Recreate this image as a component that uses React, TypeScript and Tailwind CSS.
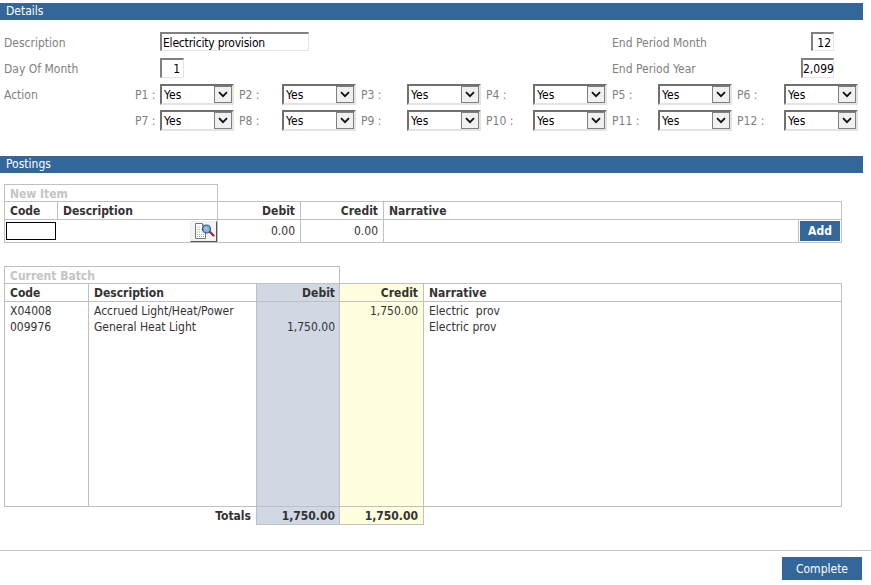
const periods = ['P1', 'P2', 'P3', 'P4', 'P5', 'P6', 'P7', 'P8', 'P9', 'P10', 'P11', 'P12']

function SectionBar({ title }: { title: string }) {
  return (
    <div className="h-[17px] w-[863px] bg-[#336699] pl-[6px] text-[12px] leading-[17px] text-white">{title}</div>
  )
}

function Field({ value, className }: { value: string; className: string }) {
  return (
    <div
      className={`h-full border-t-2 border-l-2 border-t-[#808080] border-l-[#808080] border-r border-b border-r-[#e4e4e4] border-b-[#e4e4e4] text-[12px] leading-[18px] text-black ${className}`}
    >
      {value}
    </div>
  )
}

function YesSelect() {
  return (
    <div className="flex h-[21px] w-[74px] items-center justify-between border-t-2 border-l-2 border-t-[#707070] border-l-[#707070] border-r-2 border-b-2 border-r-[#e4e4e4] border-b-[#e4e4e4] bg-white pl-[2px] text-[12px] text-black">
      <span className="pt-[1px]">Yes</span>
      <span className="flex h-[17px] w-[18px] items-center justify-center border border-[#808080] bg-[#f0f0f0]">
        <svg width="10" height="7" viewBox="0 0 10 7">
          <path d="M1 1.2 L5 5.2 L9 1.2" fill="none" stroke="#111" strokeWidth="1.8" />
        </svg>
      </span>
    </div>
  )
}

function LookupIcon() {
  return (
    <svg width="24" height="18" viewBox="0 0 24 18">
      <path d="M3.5 1.5h7l3 3v12h-10z" fill="#fff" stroke="#777" />
      <path d="M10.5 1.5v3h3" fill="#ddd" stroke="#777" />
      <path d="M5 5h4M5 7.5h5M5 10h5M5 12.5h7M5 14.5h7" stroke="#aaa" strokeDasharray="1 1" />
      <circle cx="14.5" cy="7" r="4" fill="#7fb2e0" stroke="#33597f" strokeWidth="1.2" />
      <path d="M13 5.5l2 2" stroke="#dff0ff" />
      <path d="M18 10l3.5 3.5" stroke="#9a3040" strokeWidth="2.4" strokeLinecap="round" />
    </svg>
  )
}

const cell = 'border border-[#c0c0c0] px-[5px] h-[18px] text-[12px] leading-[14px]'
const numCell = 'border border-[#c0c0c0] pl-[5px] pr-[4px] h-[18px] text-[12px] leading-[14px] text-right'

export default function App() {
  return (
    <div
      className="h-[585px] w-[871px] overflow-hidden bg-white pt-[3px] text-[12px] text-[#333] font-stretch-condensed"
      style={{ fontFamily: '"DejaVu Sans", sans-serif' }}
    >
      <SectionBar title="Details" />

      {/* Details form */}
      <div className="mt-[12px] flex h-[19px] items-center pl-[4px] text-[#808080]">
        <span className="w-[156px] pt-[2px]">Description</span>
        <Field value="Electricity provision" className="w-[149px] pl-[1px] tracking-[-0.2px]" />
        <span className="ml-[303px] w-[199px] pt-[2px]">End Period Month</span>
        <Field value="12" className="w-[23px] pr-[2px] text-right" />
      </div>
      <div className="mt-[7px] flex h-[20px] items-center pl-[4px] text-[#808080]">
        <span className="w-[156px] pt-[2px]">Day Of Month</span>
        <Field value="1" className="w-[24px] pr-[3px] text-right" />
        <span className="ml-[428px] w-[189px] pt-[2px]">End Period Year</span>
        <Field value="2,099" className="w-[33px] pr-[1px] text-right" />
      </div>
      <div className="mt-[6px] flex pl-[4px] text-[#808080]">
        <span className="w-[131px] leading-[23px]">Action</span>
        <div className="grid grid-cols-[25px_74px_48px_74px_51px_74px_52px_74px_51px_74px_52px_74px] gap-y-[5px]">
          {periods.map((p, i) => (
            <div key={p} className="contents">
              <span className={`h-[21px] leading-[23px] ${i % 6 === 0 ? '' : 'pl-[5px]'}`}>{p} :</span>
              <YesSelect />
            </div>
          ))}
        </div>
      </div>

      <div className="mt-[25px]">
        <SectionBar title="Postings" />
      </div>

      {/* New item */}
      <div className="ml-[4px] mt-[11px] h-[17px] w-[214px] border border-b-0 border-[#c0c0c0] pl-[5px] text-[12px] font-bold leading-[19px] text-[#c4c4c4]">
        New Item
      </div>
      <table className="ml-[4px] w-[837px] table-fixed border-collapse">
        <colgroup>
          <col className="w-[53px]" />
          <col className="w-[160px]" />
          <col className="w-[83px]" />
          <col className="w-[83px]" />
          <col className="w-[415px]" />
          <col className="w-[43px]" />
        </colgroup>
        <tbody>
          <tr className="font-bold">
            <td className={cell}>Code</td>
            <td className={cell}>Description</td>
            <td className={`${cell} text-right`}>Debit</td>
            <td className={`${cell} text-right`}>Credit</td>
            <td className={cell} colSpan={2}>
              Narrative
            </td>
          </tr>
          <tr>
            <td className="h-[23px] border border-[#c0c0c0] border-r-0 p-0 pl-[1px]">
              <div className="h-[18px] w-[50px] border border-black bg-white" />
            </td>
            <td className="border border-[#c0c0c0] border-l-0 p-0">
              <div className="ml-auto flex h-[21px] w-[27px] items-center justify-center border border-t-[#eee] border-l-[#eee] border-r-[#555] border-b-[#555] bg-[#f4f4f4]">
                <LookupIcon />
              </div>
            </td>
            <td className={`${cell} text-right`}>0.00</td>
            <td className={`${cell} text-right`}>0.00</td>
            <td className={cell}></td>
            <td className="border border-[#c0c0c0] p-0 text-center">
              <button className="mx-auto block h-[20px] w-[40px] bg-[#336699] text-[12px] font-bold leading-[20px] text-white">
                Add
              </button>
            </td>
          </tr>
        </tbody>
      </table>

      {/* Current batch */}
      <div className="ml-[4px] mt-[23px] h-[17px] w-[336px] border border-b-0 border-[#c0c0c0] pl-[5px] text-[12px] font-bold leading-[19px] text-[#c4c4c4]">
        Current Batch
      </div>
      <table className="ml-[4px] w-[837px] table-fixed border-collapse">
        <colgroup>
          <col className="w-[84px]" />
          <col className="w-[168px]" />
          <col className="w-[83px]" />
          <col className="w-[84px]" />
          <col className="w-[418px]" />
        </colgroup>
        <tbody>
          <tr className="font-bold">
            <td className={cell}>Code</td>
            <td className={cell}>Description</td>
            <td className={`${numCell} bg-[#d0d8e4]`}>Debit</td>
            <td className={`${cell} bg-[#ffffe0] text-right`}>Credit</td>
            <td className={cell}>Narrative</td>
          </tr>
          <tr className="align-top leading-[16px]">
            <td className="h-[205px] border border-[#c0c0c0] px-[5px] pt-[1px]">
              <div>X04008</div>
              <div>009976</div>
            </td>
            <td className="border border-[#c0c0c0] px-[5px] pt-[1px]">
              <div>Accrued Light/Heat/Power</div>
              <div>General Heat Light</div>
            </td>
            <td className="border border-[#c0c0c0] bg-[#d0d8e4] pl-[5px] pr-[4px] pt-[1px] text-right">
              <div className="h-[16px]"></div>
              <div>1,750.00</div>
            </td>
            <td className="border border-[#c0c0c0] bg-[#ffffe0] px-[5px] pt-[1px] text-right">
              <div>1,750.00</div>
            </td>
            <td className="border border-[#c0c0c0] px-[5px] pt-[1px]">
              <div className="whitespace-pre">Electric  prov</div>
              <div>Electric prov</div>
            </td>
          </tr>
          <tr className="font-bold">
            <td className="h-[17px] pr-[5px] text-right text-[12px] leading-[14px]" colSpan={2}>
              Totals
            </td>
            <td className={`${numCell} h-[17px] bg-[#d0d8e4]`}>1,750.00</td>
            <td className={`${cell} h-[17px] bg-[#ffffe0] text-right`}>1,750.00</td>
            <td></td>
          </tr>
        </tbody>
      </table>

      {/* Footer */}
      <div className="mt-[25px] flex h-[35px] justify-end border-t border-[#c8c8c8] pr-[9px] pt-[6px]">
        <button className="h-[23px] w-[80px] bg-[#336699] text-[12px] text-white">Complete</button>
      </div>
    </div>
  )
}
